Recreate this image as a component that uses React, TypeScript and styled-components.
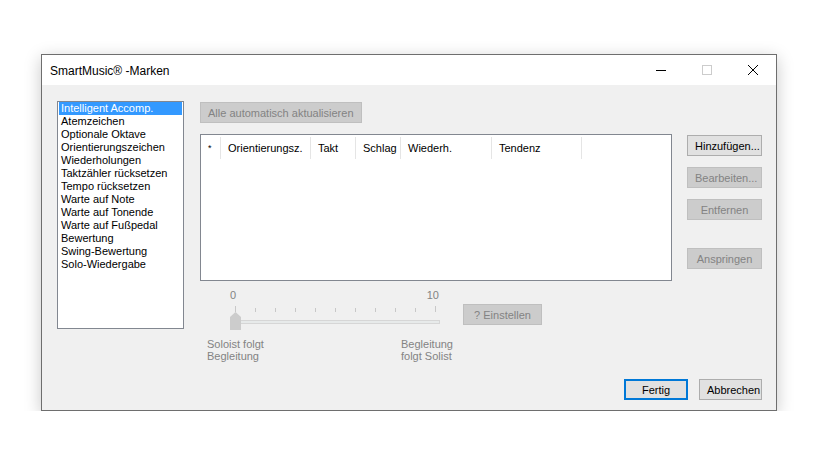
import React from 'react';
import styled, { createGlobalStyle, css } from 'styled-components';

const GlobalStyle = createGlobalStyle`
  html, body {
    margin: 0;
    padding: 0;
    background: #ffffff;
  }
  body {
    font-family: "Liberation Sans", Arial, sans-serif;
  }
`;

const markers = [
  'Intelligent Accomp.',
  'Atemzeichen',
  'Optionale Oktave',
  'Orientierungszeichen',
  'Wiederholungen',
  'Taktzähler rücksetzen',
  'Tempo rücksetzen',
  'Warte auf Note',
  'Warte auf Tonende',
  'Warte auf Fußpedal',
  'Bewertung',
  'Swing-Bewertung',
  'Solo-Wiedergabe',
];

const columns = [
  { label: '*', width: 20 },
  { label: 'Orientierungsz.', width: 90 },
  { label: 'Takt', width: 45 },
  { label: 'Schlag', width: 45 },
  { label: 'Wiederh.', width: 91 },
  { label: 'Tendenz', width: 90 },
];

const App: React.FC = () => {
  return (
    <>
      <GlobalStyle />
      <Window>
        <TitleBar>
          <Title>SmartMusic® -Marken</Title>
          <Caption>
            <CaptionButton>
              <svg width="10" height="10" viewBox="0 0 10 10">
                <line x1="0" y1="5.5" x2="10" y2="5.5" stroke="#000" strokeWidth="1" />
              </svg>
            </CaptionButton>
            <CaptionButton>
              <svg width="10" height="10" viewBox="0 0 10 10">
                <rect x="0.5" y="0.5" width="9" height="9" fill="none" stroke="#cccccc" strokeWidth="1" />
              </svg>
            </CaptionButton>
            <CaptionButton>
              <svg width="10" height="10" viewBox="0 0 10 10">
                <path d="M0 0 L10 10 M10 0 L0 10" stroke="#000" strokeWidth="1" />
              </svg>
            </CaptionButton>
          </Caption>
        </TitleBar>

        <Body>
          <Main>
            <ListBox>
              {markers.map((m, i) => (
                <ListItem key={m} selected={i === 0}>{m}</ListItem>
              ))}
            </ListBox>

            <Center>
              <Button disabled>Alle automatisch aktualisieren</Button>
              <Table>
                <HeaderRow>
                  {columns.map((c) => (
                    <HeaderCell key={c.label} style={{ width: c.width }} small={c.label === '*'}>
                      {c.label}
                    </HeaderCell>
                  ))}
                </HeaderRow>
              </Table>

              <SliderRow>
                <Slider>
                  <ScaleLabels>
                    <span>0</span>
                    <span>10</span>
                  </ScaleLabels>
                  <svg width="240" height="26" viewBox="0 0 240 26">
                    {Array.from({ length: 11 }).map((_, i) => (
                      <line
                        key={i}
                        x1={28.5 + i * 20}
                        x2={28.5 + i * 20}
                        y1={i === 0 || i === 10 ? 1 : 3}
                        y2={7}
                        stroke="#c8c8c8"
                        strokeWidth="1"
                      />
                    ))}
                    <rect x="28.5" y="15.5" width="204" height="3" fill="#e7eaea" stroke="#d6d6d6" />
                    <path d="M23 12 L28.5 7 L34 12 L34 25 L23 25 Z" fill="#cccccc" />
                  </svg>
                  <EndLabels>
                    <span>Soloist folgt<br />Begleitung</span>
                    <span>Begleitung<br />folgt Solist</span>
                  </EndLabels>
                </Slider>
                <SetButton disabled>? Einstellen</SetButton>
              </SliderRow>
            </Center>

            <Side>
              <Button width={75}>Hinzufügen...</Button>
              <Button width={75} disabled>Bearbeiten...</Button>
              <Button width={75} disabled>Entfernen</Button>
              <Button width={75} disabled spaced>Anspringen</Button>
            </Side>
          </Main>

          <Footer>
            <Button width={64} primary>Fertig</Button>
            <Button width={63}>Abbrechen</Button>
          </Footer>
        </Body>
      </Window>
    </>
  );
};

const Window = styled.div`
  margin: 54px 0 0 41px;
  width: 734px;
  height: 355px;
  border: 1px solid #6e6e6e;
  box-shadow: 0 4px 16px rgba(0, 0, 0, 0.22);
  display: flex;
  flex-direction: column;
  background: #f0f0f0;
`;

const TitleBar = styled.div`
  height: 30px;
  background: #ffffff;
  display: flex;
  align-items: center;
  justify-content: space-between;
`;

const Title = styled.div`
  padding-left: 8px;
  font-size: 12px;
  color: #000;
  margin-top: 1px;
`;

const Caption = styled.div`
  display: flex;
  height: 100%;
`;

const CaptionButton = styled.div`
  width: 46px;
  height: 100%;
  display: flex;
  align-items: center;
  justify-content: center;
`;

const Body = styled.div`
  flex: 1;
  display: flex;
  flex-direction: column;
  padding: 16px 14px 10px 15px;
  font-size: 11px;
`;

const Main = styled.div`
  display: flex;
  align-items: flex-start;
`;

const ListBox = styled.div`
  width: 126px;
  height: 226px;
  border: 1px solid #828790;
  background: #fff;
  padding: 0 1px;
`;

const ListItem = styled.div<{ selected?: boolean }>`
  height: 13px;
  line-height: 13px;
  padding-left: 2px;
  white-space: nowrap;
  color: ${(p) => (p.selected ? '#fff' : '#000')};
  background: ${(p) => (p.selected ? '#3399ff' : 'transparent')};
`;

const Center = styled.div`
  margin-left: 16px;
  margin-top: 1px;
  width: 472px;
  display: flex;
  flex-direction: column;
  align-items: flex-start;
`;

const Button = styled.button<{ width?: number; primary?: boolean; spaced?: boolean }>`
  font-family: "Liberation Sans", Arial, sans-serif;
  font-size: 11px;
  height: 21px;
  padding: 0 7px;
  margin: 0;
  ${(p) => p.width && css`width: ${p.width}px;`}
  background: #e1e1e1;
  border: 1px solid #adadad;
  color: #000;
  white-space: nowrap;
  ${(p) =>
    p.disabled &&
    css`
      background: #cccccc;
      border-color: #bfbfbf;
      color: #838383;
    `}
  ${(p) =>
    p.primary &&
    css`
      border: 2px solid #0078d7;
    `}
  ${(p) => p.spaced && css`margin-top: 17px;`}
`;

const SetButton = styled(Button)`
  width: 79px;
  margin-top: 15px;
  margin-left: 1px;
`;

const Table = styled.div`
  margin-top: 11px;
  width: 470px;
  height: 145px;
  border: 1px solid #828790;
  background: #fff;
`;

const HeaderRow = styled.div`
  display: flex;
  height: 24px;
  padding-top: 1px;
`;

const HeaderCell = styled.div<{ small?: boolean }>`
  box-sizing: border-box;
  padding-left: 7px;
  border-right: 1px solid #e5e5e5;
  margin: 1px 0;
  line-height: 22px;
  white-space: nowrap;
  font-size: ${(p) => (p.small ? '9px' : '11px')};
`;

const SliderRow = styled.div`
  display: flex;
  align-items: flex-start;
  margin-top: 8px;
`;

const Slider = styled.div`
  margin-left: 7px;
  width: 255px;
  color: #838383;
  display: flex;
  flex-direction: column;
`;

const ScaleLabels = styled.div`
  display: flex;
  justify-content: space-between;
  width: 209px;
  margin-left: 23px;
  height: 16px;
  line-height: 13px;
`;

const EndLabels = styled.div`
  display: grid;
  grid-template-columns: 194px auto;
  margin-top: 7px;
  line-height: 12px;
`;

const Side = styled.div`
  margin-left: 15px;
  margin-top: 34px;
  display: flex;
  flex-direction: column;
  gap: 11px;
`;

const Footer = styled.div`
  margin-top: auto;
  display: flex;
  justify-content: flex-end;
  gap: 11px;
`;

export default App;
